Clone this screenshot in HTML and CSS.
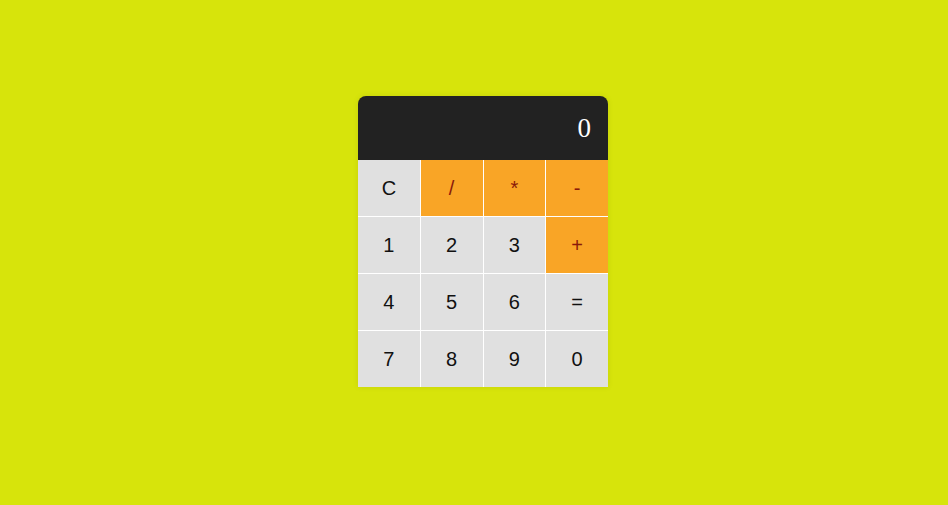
FILE: index.html
```html
<!DOCTYPE html>
<html>
<head>
<meta charset="utf-8">
<link rel="stylesheet" href="styles.css">
</head>
<body>
<div class="page">
  <div class="calc">
    <div class="display">0</div>
    <div class="keys">
      <div class="key">C</div>
      <div class="key op">/</div>
      <div class="key op">*</div>
      <div class="key op">-</div>
      <div class="key">1</div>
      <div class="key">2</div>
      <div class="key">3</div>
      <div class="key op">+</div>
      <div class="key">4</div>
      <div class="key">5</div>
      <div class="key">6</div>
      <div class="key">=</div>
      <div class="key">7</div>
      <div class="key">8</div>
      <div class="key">9</div>
      <div class="key">0</div>
    </div>
  </div>
</div>
</body>
</html>
```
FILE: styles.css
```css
html, body {
  margin: 0;
  height: 100%;
  background: #d7e40b;
}
.page {
  display: flex;
  justify-content: center;
  align-items: flex-start;
  padding-top: 96px;
  padding-left: 18px;
}
.calc {
  width: 250px;
  border-radius: 8px 8px 0 0;
  overflow: hidden;
  box-shadow: 0 0 6px rgba(0,0,0,0.08);
}
.display {
  height: 64px;
  background: #222222;
  color: #ffffff;
  font-family: "Liberation Serif", serif;
  font-size: 27px;
  display: flex;
  align-items: center;
  justify-content: flex-end;
  padding-right: 17px;
}
.keys {
  display: grid;
  grid-template-columns: repeat(4, 1fr);
  grid-auto-rows: 56px;
  gap: 1px;
  background: #ffffff;
}
.key {
  background: #e0e0e0;
  color: #111;
  font-family: "Liberation Sans", Arial, sans-serif;
  font-size: 20px;
  display: flex;
  align-items: center;
  justify-content: center;
}
.key.op {
  background: #f9a526;
  color: #8a1a0a;
}
```
